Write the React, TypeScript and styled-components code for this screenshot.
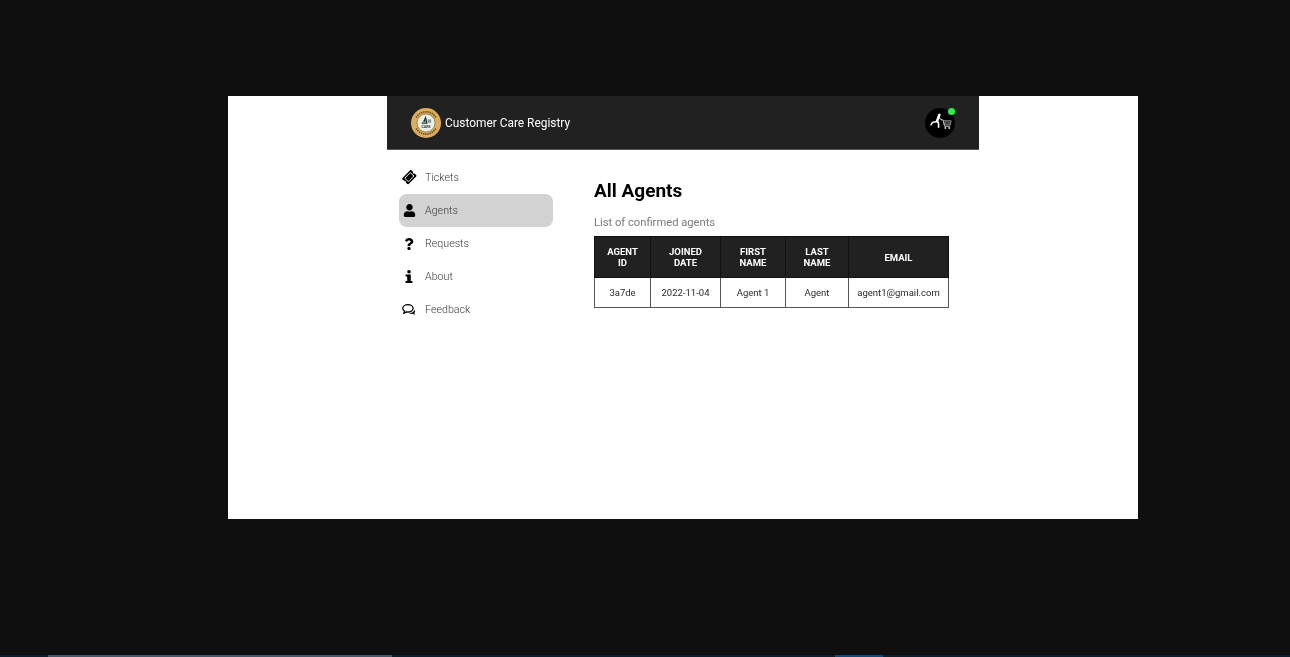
import React from "react";
import styled, { createGlobalStyle } from "styled-components";
import { FaTicketAlt, FaUser, FaQuestion } from "react-icons/fa";

const Global = createGlobalStyle`
  html, body { margin: 0; padding: 0; background: #0f0f0f; height: 100%; overflow: hidden; }
  #root { height: 100%; }
  * { box-sizing: border-box; }
`;

const Viewport = styled.div`
  width: 1290px;
  height: 657px;
  padding: 96px 152px 0 228px;
  position: relative;
  background: #0f0f0f;
`;

const Page = styled.div`
  width: 910px;
  height: 423px;
  background: #fff;
  padding-left: 159px;
  font-family: Roboto, "Liberation Sans", sans-serif;
`;

const Frame = styled.div`
  width: 592px;
  display: flex;
  flex-direction: column;
  will-change: transform;
`;

const Header = styled.header`
  height: 54px;
  background: #212121;
  border-bottom: 1px solid #555;
  display: flex;
  align-items: center;
  justify-content: space-between;
  padding: 0 24px;
`;

const Brand = styled.div`
  display: flex;
  align-items: center;
  gap: 4px;
  color: #fff;
  font-size: 11.9px;
`;

const Avatar = styled.div`
  position: relative;
  width: 30px;
  height: 30px;
`;

const Dot = styled.span`
  position: absolute;
  top: 0;
  right: 0;
  width: 7px;
  height: 7px;
  border-radius: 50%;
  background: #2bf04a;
`;

const Body = styled.div`
  display: flex;
  padding: 11px 12px 0;
`;

const Nav = styled.nav`
  width: 154px;
  display: flex;
  flex-direction: column;
`;

const NavItem = styled.div<{ $active?: boolean }>`
  height: 33px;
  display: flex;
  align-items: center;
  padding-left: 3px;
  gap: 9px;
  border-radius: 8px;
  background: ${(p) => (p.$active ? "#d2d2d2" : "transparent")};
  color: #3a3a3a;
  font-size: 10.7px;
  font-weight: 300;
`;

const NavIcon = styled.span<{ $size: number; $turn?: boolean }>`
  width: 14px;
  display: flex;
  justify-content: center;
  color: #000;
  font-size: ${(p) => p.$size}px;
  transform: ${(p) => (p.$turn ? "rotate(-45deg)" : "none")};
`;

const Main = styled.main`
  margin-left: 41px;
  padding-top: 18px;
`;

const Title = styled.h1`
  margin: 0;
  font-size: 19px;
  line-height: 24px;
  font-weight: 700;
  color: #000;
`;

const Sub = styled.p`
  margin: 13px 0 0;
  font-size: 11.2px;
  line-height: 14px;
  color: #7a7a7a;
`;

const Table = styled.table`
  margin-top: 6px;
  border-collapse: collapse;
  table-layout: fixed;
  width: 354px;
`;

const Th = styled.th<{ $w: number }>`
  width: ${(p) => p.$w}px;
  height: 41px;
  padding: 0;
  background: #212121;
  color: #fff;
  font-size: 9.5px;
  line-height: 11px;
  font-weight: 700;
  text-align: center;
  border: 1px solid #111;
`;

const Td = styled.td`
  height: 30px;
  padding: 0;
  font-size: 9.5px;
  color: #2a2a2a;
  text-align: center;
  border: 1px solid #555;
`;

const Strip = styled.div<{ $l: number; $w: number; $c: string }>`
  position: absolute;
  bottom: 0;
  left: ${(p) => p.$l}px;
  width: ${(p) => p.$w}px;
  height: 2px;
  background: ${(p) => p.$c};
`;

const Logo = () => (
  <svg width="30" height="30" viewBox="0 0 30 30">
    <circle cx="15" cy="15" r="15" fill="#dcae5e" />
    <path d="M5.2 9.5A11.3 11.3 0 0 1 24.8 9.5" fill="none" stroke="#5d4a20" strokeWidth="1.7" strokeDasharray="1.3 .9" />
    <path d="M5.2 20.5A11.3 11.3 0 0 0 24.8 20.5" fill="none" stroke="#5d4a20" strokeWidth="1.7" strokeDasharray="1.3 .9" />
    <circle cx="15" cy="15" r="9" fill="#eef0e6" stroke="#4a4526" strokeWidth="0.5" />
    <path d="M14.8 7.8l-2.8 6h2.4v-2.6l.7 3.4h-4.4v1.2h5.8z" fill="#14302d" />
    <path d="M16.6 11.4h3.6v3.4h-3.6z" fill="#8a9a94" />
    <text x="15" y="20.4" fontSize="3.6" fontWeight="700" textAnchor="middle" fill="#2c3a36" fontFamily="Roboto, sans-serif">CARE</text>
  </svg>
);

const CartMark = () => (
  <svg width="30" height="30" viewBox="0 0 30 30">
    <circle cx="15" cy="15" r="15" fill="#000" />
    <g fill="none" stroke="#fff" strokeLinecap="round" strokeLinejoin="round">
      <path d="M14.4 6.8L12 13.2" strokeWidth="2.5" />
      <path d="M11.8 13.6L7.4 14.6 6 16.8" strokeWidth="1.5" />
      <path d="M12 13.4l1.4 1.2.2 4.6" strokeWidth="1.6" />
      <path d="M13.6 9.4l3.2 2.6" strokeWidth="1" />
    </g>
    <path d="M16.6 11.8h1.5l1.5 6.6h5.6" fill="none" stroke="#ccc" strokeWidth=".8" />
    <path d="M18.4 12.8h7.8l-1 4.2h-5.9z" fill="none" stroke="#ccc" strokeWidth=".7" />
    <path d="M20.2 12.8v4.2M22.1 12.8v4.2M24 12.8v4.2M18.8 14.9h7" stroke="#aaa" strokeWidth=".45" />
    <circle cx="20.4" cy="20" r="1" fill="#ccc" />
    <circle cx="24.2" cy="20" r="1" fill="#ccc" />
  </svg>
);

const InfoGlyph = () => (
  <svg width="8" height="13" viewBox="0 0 8 13" fill="currentColor">
    <circle cx="4" cy="1.8" r="1.8" />
    <path d="M.6 4.6h5.2v6.4H7.4V13H.5v-2h1.7V6.6H.6z" />
  </svg>
);

const CommentsGlyph = () => (
  <svg width="16" height="13" viewBox="0 0 16 13">
    <path d="M7.5 10.6c2.6.2 5.6-.8 6.8-3.6.9 1.1.9 2.4-.2 3.4l.6 2.4-2.4-1.4c-1.8.4-3.6 0-4.8-.8z" fill="#000" />
    <ellipse cx="6.8" cy="5.2" rx="5.9" ry="4.2" fill="#fff" stroke="#000" strokeWidth="1.5" />
    <path d="M3 8.2L1.8 11l3.8-1.9" fill="#fff" stroke="#000" strokeWidth="1.2" strokeLinejoin="round" />
  </svg>
);

const navItems = [
  { label: "Tickets", icon: <FaTicketAlt />, size: 13, turn: true },
  { label: "Agents", icon: <FaUser />, size: 13, active: true },
  { label: "Requests", icon: <FaQuestion />, size: 12 },
  { label: "About", icon: <InfoGlyph />, size: 13 },
  { label: "Feedback", icon: <CommentsGlyph />, size: 13 },
];

const columns = [
  { title: ["AGENT", "ID"], w: 56 },
  { title: ["JOINED", "DATE"], w: 70 },
  { title: ["FIRST", "NAME"], w: 65 },
  { title: ["LAST", "NAME"], w: 63 },
  { title: ["EMAIL"], w: 100 },
];

const row = ["3a7de", "2022-11-04", "Agent 1", "Agent", "agent1@gmail.com"];

export default function App() {
  return (
    <Viewport>
      <Global />
      <Page>
        <Frame>
          <Header>
            <Brand>
              <Logo />
              Customer Care Registry
            </Brand>
            <Avatar>
              <CartMark />
              <Dot />
            </Avatar>
          </Header>
          <Body>
            <Nav>
              {navItems.map((n) => (
                <NavItem key={n.label} $active={n.active}>
                  <NavIcon $size={n.size} $turn={n.turn}>{n.icon}</NavIcon>
                  {n.label}
                </NavItem>
              ))}
            </Nav>
            <Main>
              <Title>All Agents</Title>
              <Sub>List of confirmed agents</Sub>
              <Table>
                <thead>
                  <tr>
                    {columns.map((c) => (
                      <Th key={c.title[0]} $w={c.w}>
                        {c.title.map((t, i) => (
                          <React.Fragment key={t}>
                            {i > 0 && <br />}
                            {t}
                          </React.Fragment>
                        ))}
                      </Th>
                    ))}
                  </tr>
                </thead>
                <tbody>
                  <tr>
                    {row.map((v) => (
                      <Td key={v}>{v}</Td>
                    ))}
                  </tr>
                </tbody>
              </Table>
            </Main>
          </Body>
        </Frame>
      </Page>
      <Strip $l={0} $w={1290} $c="#0a1f2b" />
      <Strip $l={48} $w={344} $c="#44586a" />
      <Strip $l={835} $w={48} $c="#0f4a78" />
    </Viewport>
  );
}
